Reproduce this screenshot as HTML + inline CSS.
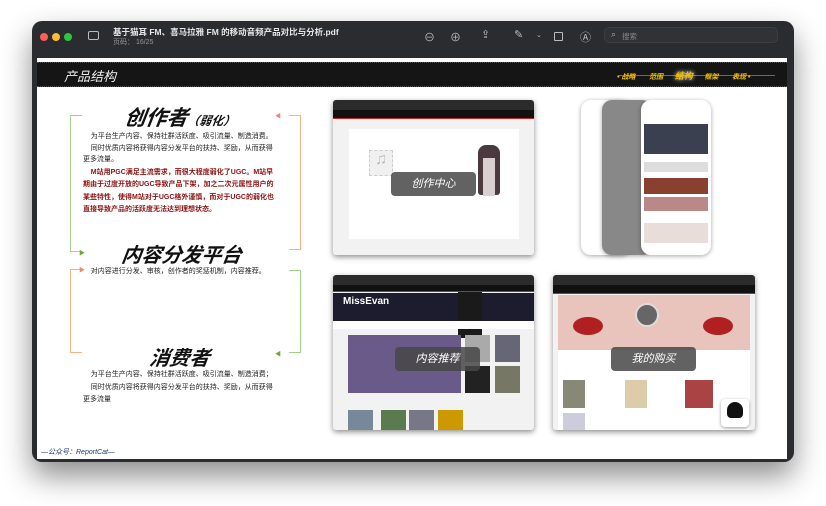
<!DOCTYPE html>
<html><head><meta charset="utf-8"><style>
*{margin:0;padding:0;box-sizing:border-box}
body{width:826px;height:506px;background:#fff;position:relative;overflow:hidden;font-family:"Liberation Sans","Noto Sans CJK SC",sans-serif}
.win{position:absolute;left:32px;top:21px;width:762px;height:441px;background:#2a2c2f;border-radius:10px;box-shadow:0 14px 30px rgba(0,0,0,.45)}
.page{position:absolute;left:37px;top:58px;width:750px;height:401px;background:#fff}
.abs{position:absolute}
.dot{position:absolute;top:12px;width:8px;height:8px;border-radius:50%}
.t{color:#d0d0d0;font-size:8px}
.banner{position:absolute;left:0;top:4px;width:750px;height:25px;background:#151515;border-top:1px dotted #555;border-bottom:1px dotted #555}
.h{position:absolute;font-weight:bold;font-style:italic;color:#111;transform:skewX(-8deg)}
.p{position:absolute;font-size:7px;line-height:11.7px;color:#222;width:192px}
.shot{position:absolute;background:#f2f2f2;box-shadow:0 2px 6px rgba(0,0,0,.45);border-radius:3px;overflow:hidden}
.bar{position:absolute;left:0;top:0;width:100%;height:10px;background:#2b2b2b}
.nav{position:absolute;left:0;top:10px;width:100%;height:10px;background:#111;border-bottom:1px solid #c22}
.lbl{position:absolute;background:rgba(70,70,70,.85);color:#fff;font-style:italic;font-size:11px;text-align:center;border-radius:4px}
</style></head><body>
<div class="win">
 <div class="dot" style="left:8px;background:#fe5f57"></div>
 <div class="dot" style="left:20px;background:#febc2e"></div>
 <div class="dot" style="left:32px;background:#28c840"></div>
 <div class="abs" style="left:56px;top:10px;width:11px;height:9px;border:1.3px solid #bbb;border-radius:2px"></div>
 <div class="abs t" style="left:81px;top:5px;font-size:8.5px;color:#e6e6e6;font-weight:bold">基于猫耳 FM、喜马拉雅 FM 的移动音频产品对比与分析.pdf</div>
 <div class="abs t" style="left:81px;top:16px;font-size:7px;color:#999">页码： 16/25</div>
 <div class="abs t" style="left:392px;top:8px;font-size:11px;color:#bbb">⊖</div>
 <div class="abs t" style="left:418px;top:8px;font-size:11px;color:#bbb">⊕</div>
 <div class="abs t" style="left:449px;top:7px;font-size:11px;color:#bbb">⇪</div>
 <div class="abs t" style="left:482px;top:7px;font-size:11px;color:#bbb">✎</div>
 <div class="abs t" style="left:504px;top:10px;font-size:7px;color:#bbb">⌄</div>
 <div class="abs" style="left:522px;top:11px;width:9px;height:9px;border:1.2px solid #bbb;border-radius:1px"></div>
 <div class="abs t" style="left:548px;top:8px;font-size:11px;color:#bbb">Ⓐ</div>
 <div class="abs" style="left:572px;top:6px;width:174px;height:16px;background:#303236;border:1px solid #3c3e42;border-radius:5px"><span style="position:absolute;left:6px;top:1px;font-size:9px;color:#aaa">⌕</span><span style="position:absolute;left:17px;top:3px;font-size:7.5px;color:#888">搜索</span></div>
</div>
<div class="page">
 <div class="banner">
  <div class="abs" style="left:27px;top:3px;color:#eee;font-size:13px;font-style:italic">产品结构</div>
  <div class="abs" style="left:582px;top:12px;width:156px;height:1px;background:#8a6a10"></div>
  <div class="abs" style="left:580px;top:6px;font-size:7px;color:#f4c000;font-weight:bold;font-style:italic;white-space:nowrap">• 战略 &nbsp;&nbsp;&nbsp;&nbsp;&nbsp;&nbsp;范围 &nbsp;&nbsp;&nbsp;&nbsp;&nbsp;<span style="font-size:9px;text-shadow:0 0 4px #fff">结构</span>&nbsp;&nbsp;&nbsp;&nbsp;&nbsp;&nbsp;框架 &nbsp;&nbsp;&nbsp;&nbsp;&nbsp;&nbsp;表现 •</div>
 </div>
 <div class="abs" style="left:33px;top:57px;width:12px;height:137px;border:1px solid #a8d08d;border-right:none"></div>
 <div class="abs" style="left:252px;top:57px;width:12px;height:135px;border:1px solid #f4b183;border-left:none"></div>
 <div class="abs" style="left:33px;top:211px;width:12px;height:84px;border:1px solid #f4b183;border-right:none"></div>
 <div class="abs" style="left:252px;top:212px;width:12px;height:83px;border:1px solid #a8d08d;border-left:none"></div>
 <div class="abs" style="left:42px;top:190px;color:#6a3;font-size:6px">▶</div>
 <div class="abs" style="left:238px;top:53px;color:#e86;font-size:6px">◀</div>
 <div class="abs" style="left:42px;top:207px;color:#e86;font-size:6px">▶</div>
 <div class="abs" style="left:238px;top:291px;color:#6a3;font-size:6px">◀</div>

 <div class="h" style="left:88px;top:44px;font-size:21px">创作者<span style="font-size:12px">（弱化）</span></div>
 <div class="p" style="left:46px;top:73px">&nbsp;&nbsp;&nbsp;&nbsp;为平台生产内容、保持社群活跃度、吸引流量、制造消费。<br>&nbsp;&nbsp;&nbsp;&nbsp;同时优质内容将获得内容分发平台的扶持、奖励，从而获得更多流量。</div>
 <div class="p" style="left:46px;top:109px;color:#8b1010;font-weight:bold;line-height:12.3px">&nbsp;&nbsp;&nbsp;&nbsp;M站用PGC满足主流需求，而很大程度弱化了UGC。M站早期由于过度开放的UGC导致产品下架，加之二次元属性用户的某些特性，使得M站对于UGC格外谨慎，而对于UGC的弱化也直接导致产品的活跃度无法达到理想状态。</div>
 <div class="h" style="left:85px;top:181px;font-size:20px">内容分发平台</div>
 <div class="p" style="left:46px;top:208px;width:210px">&nbsp;&nbsp;&nbsp;&nbsp;对内容进行分发、审核，创作者的奖惩机制，内容推荐。</div>
 <div class="h" style="left:113px;top:284px;font-size:20px">消费者</div>
 <div class="p" style="left:46px;top:311px;line-height:12.5px">&nbsp;&nbsp;&nbsp;&nbsp;为平台生产内容、保持社群活跃度、吸引流量、制造消费；<br>&nbsp;&nbsp;&nbsp;&nbsp;同时优质内容将获得内容分发平台的扶持、奖励，从而获得更多流量</div>
 <div class="abs" style="left:4px;top:389px;font-size:7px;color:#1f3a6a;font-style:italic">—公众号：ReportCat—</div>

 <div class="shot" style="left:296px;top:42px;width:201px;height:155px">
  <div class="bar"></div><div class="nav" style="height:9px"></div>
  <div class="abs" style="left:16px;top:29px;width:170px;height:110px;background:#fff"></div>
  <div class="abs" style="left:36px;top:50px;width:24px;height:26px;border:1px dashed #ccc;background:#f0f0f0;color:#bbb;font-size:16px;text-align:center">♫</div>
  <div class="abs" style="left:145px;top:45px;width:22px;height:50px;background:#4a3a40;border-radius:8px 8px 3px 3px"></div>
  <div class="abs" style="left:150px;top:58px;width:12px;height:38px;background:#d9cfd0"></div>
  <div class="lbl" style="left:58px;top:72px;width:85px;height:24px;line-height:24px">创作中心</div>
 </div>
 <div class="abs" style="left:544px;top:42px;width:50px;height:155px;background:#fff;border-radius:10px;box-shadow:0 1px 5px rgba(0,0,0,.35)"></div>
 <div class="abs" style="left:565px;top:42px;width:50px;height:155px;background:#888;border-radius:10px;box-shadow:0 1px 5px rgba(0,0,0,.35)"></div>
 <div class="abs" style="left:604px;top:42px;width:70px;height:155px;background:#fff;border-radius:10px;box-shadow:0 1px 5px rgba(0,0,0,.35)">
  <div class="abs" style="left:3px;top:24px;width:64px;height:30px;background:#3a4050"></div>
  <div class="abs" style="left:3px;top:62px;width:64px;height:10px;background:#ddd"></div>
  <div class="abs" style="left:3px;top:78px;width:64px;height:16px;background:#8a4030"></div>
  <div class="abs" style="left:3px;top:97px;width:64px;height:14px;background:#b88"></div>
  <div class="abs" style="left:3px;top:123px;width:64px;height:20px;background:#e8ddd8"></div>
 </div>
 <div class="shot" style="left:296px;top:217px;width:201px;height:155px">
  <div class="bar"></div><div class="nav" style="height:7px"></div>
  <div class="abs" style="left:0;top:18px;width:201px;height:28px;background:#1c1c2e"></div>
  <div class="abs" style="left:10px;top:21px;color:#fff;font-weight:bold;font-size:10px">MissEvan</div>
  <div class="abs" style="left:125px;top:17px;width:24px;height:46px;background:#1a1a1a"></div>
  <div class="abs" style="left:0;top:46px;width:201px;height:8px;background:#fff"></div>
  <div class="abs" style="left:15px;top:60px;width:113px;height:58px;background:#6a5a8a"></div>
  <div class="abs" style="left:132px;top:60px;width:25px;height:27px;background:#aaa"></div>
  <div class="abs" style="left:162px;top:60px;width:25px;height:27px;background:#667"></div>
  <div class="abs" style="left:132px;top:91px;width:25px;height:27px;background:#222"></div>
  <div class="abs" style="left:162px;top:91px;width:25px;height:27px;background:#776"></div>
  <div class="abs" style="left:15px;top:135px;width:25px;height:20px;background:#789"></div>
  <div class="abs" style="left:48px;top:135px;width:25px;height:20px;background:#5a7a50"></div>
  <div class="abs" style="left:76px;top:135px;width:25px;height:20px;background:#778"></div>
  <div class="abs" style="left:105px;top:135px;width:25px;height:20px;background:#c90"></div>
  <div class="lbl" style="left:62px;top:72px;width:85px;height:24px;line-height:24px">内容推荐</div>
 </div>
 <div class="shot" style="left:516px;top:217px;width:202px;height:155px">
  <div class="bar"></div><div class="nav" style="height:9px"></div>
  <div class="abs" style="left:5px;top:20px;width:192px;height:55px;background:#e8c4bc"></div>
  <div class="abs" style="left:20px;top:42px;width:30px;height:18px;background:#b02020;border-radius:50%"></div>
  <div class="abs" style="left:150px;top:42px;width:30px;height:18px;background:#b02020;border-radius:50%"></div>
  <div class="abs" style="left:82px;top:28px;width:24px;height:24px;background:#666;border-radius:50%;border:2px solid #ddd"></div>
  <div class="abs" style="left:5px;top:75px;width:192px;height:80px;background:#fff"></div>
  <div class="abs" style="left:10px;top:105px;width:22px;height:28px;background:#887"></div>
  <div class="abs" style="left:72px;top:105px;width:22px;height:28px;background:#dca"></div>
  <div class="abs" style="left:132px;top:105px;width:28px;height:28px;background:#a44"></div>
  <div class="abs" style="left:10px;top:138px;width:22px;height:17px;background:#ccd"></div>
  <div class="abs" style="left:168px;top:124px;width:28px;height:28px;background:#fff;border-radius:4px;box-shadow:0 1px 3px rgba(0,0,0,.4)"><div style="position:absolute;left:6px;top:3px;width:16px;height:16px;background:#111;border-radius:50% 50% 4px 4px"></div></div>
  <div class="lbl" style="left:58px;top:72px;width:85px;height:24px;line-height:24px">我的购买</div>
 </div>
</div>
</body></html>
